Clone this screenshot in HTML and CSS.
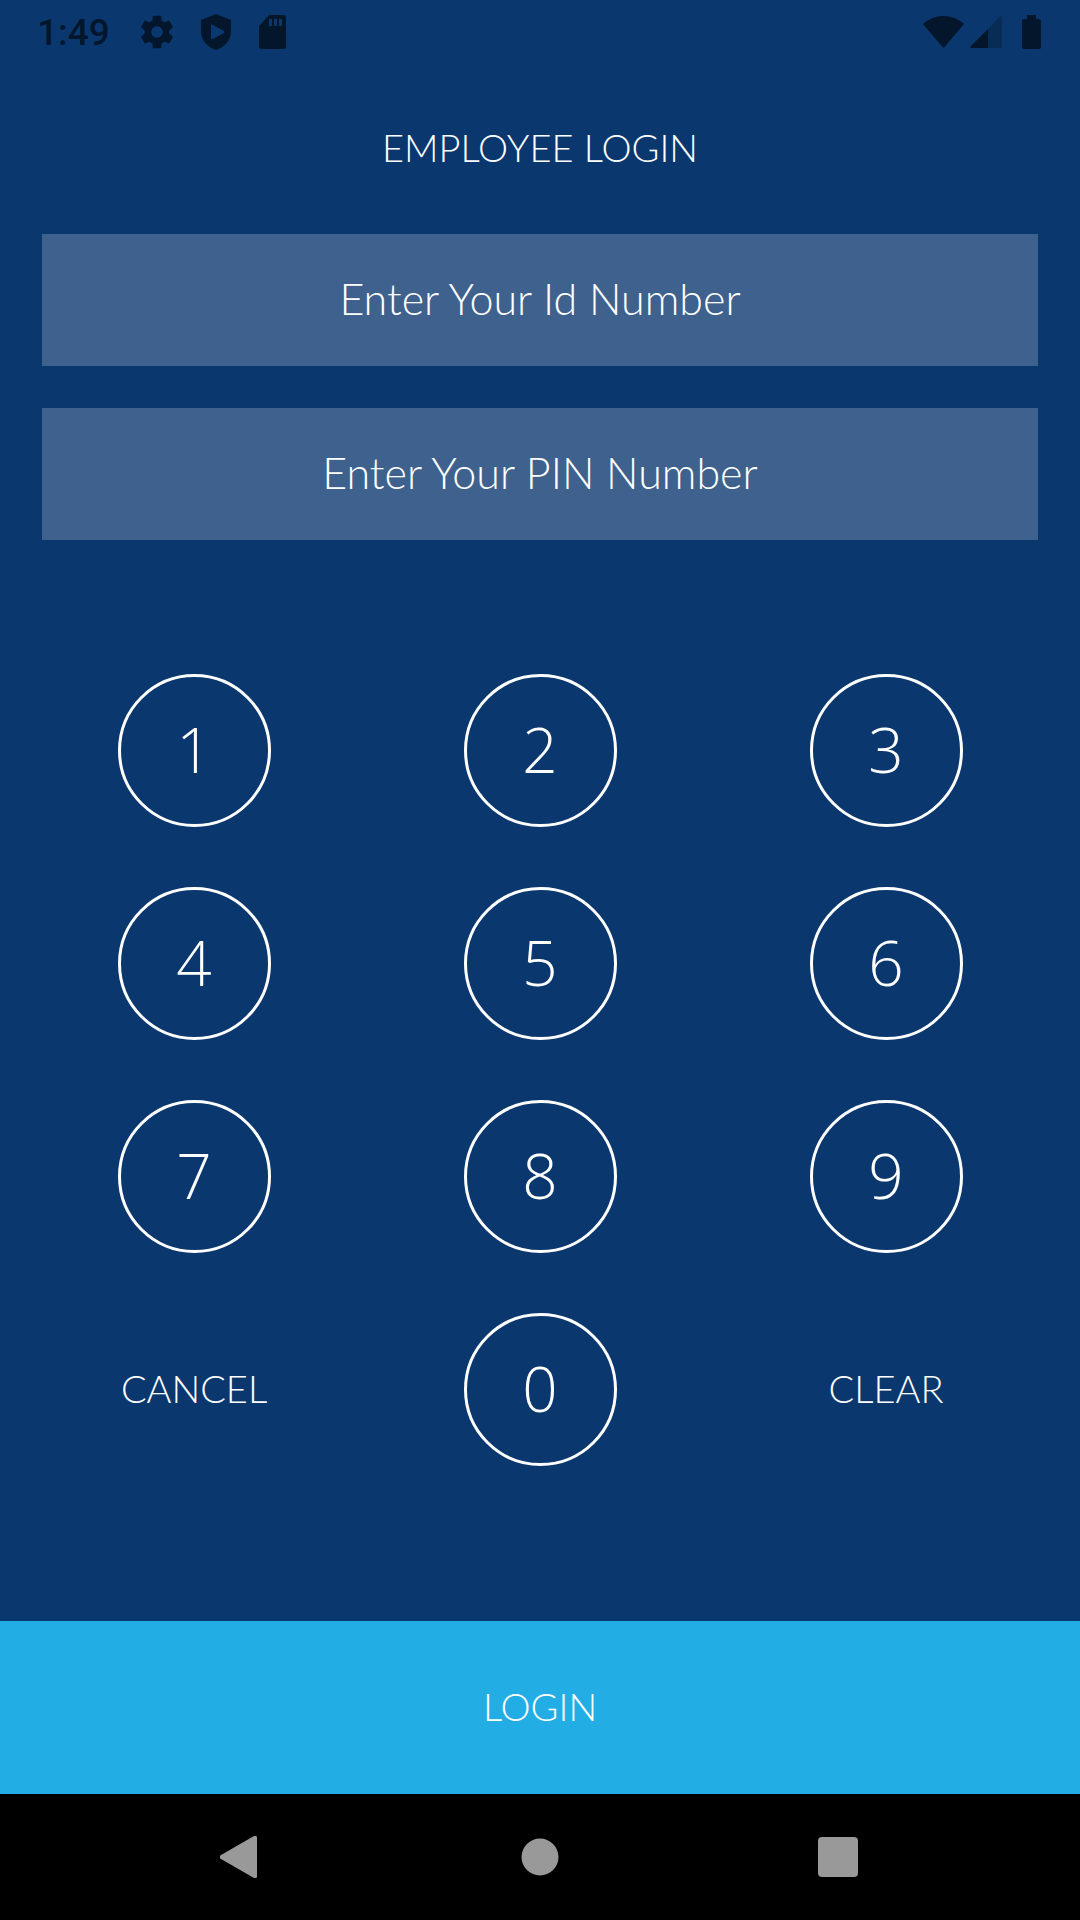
FILE: index.html
```
<!DOCTYPE html>
<html lang="en">
<head>
    <meta charset="UTF-8">
    <meta name="viewport" content="width=device-width, initial-scale=1">
    <title>Employee Login</title>
    <link rel="stylesheet" href="styles.css">
</head>
<body>
    <div class="status-bar">
        <span class="clock">1:49</span>
        <div class="status-left">
            <svg width="32" height="34" viewBox="2.2 2 19.6 20"><path d="M19.43 12.98c.04-.32.07-.64.07-.98s-.03-.66-.07-.98l2.11-1.65c.19-.15.24-.42.12-.64l-2-3.46c-.12-.22-.39-.3-.61-.22l-2.49 1c-.52-.4-1.08-.73-1.69-.98l-.38-2.65C14.46 2.18 14.25 2 14 2h-4c-.25 0-.46.18-.49.42l-.38 2.65c-.61.25-1.17.59-1.69.98l-2.49-1c-.23-.09-.49 0-.61.22l-2 3.46c-.13.22-.07.49.12.64l2.11 1.65c-.04.32-.07.65-.07.98s.03.66.07.98l-2.11 1.65c-.19.15-.24.42-.12.64l2 3.46c.12.22.39.3.61.22l2.49-1c.52.4 1.08.73 1.69.98l.38 2.65c.03.24.24.42.49.42h4c.25 0 .46-.18.49-.42l.38-2.65c.61-.25 1.17-.59 1.69-.98l2.49 1c.23.09.49 0 .61-.22l2-3.46c.12-.22.07-.49-.12-.64l-2.11-1.65zM12 15.5c-1.93 0-3.5-1.57-3.5-3.5s1.57-3.5 3.5-3.5 3.5 1.57 3.5 3.5-1.57 3.5-3.5 3.5z"/></svg>
            <svg width="30" height="36" viewBox="0 0 30 36"><path fill-rule="evenodd" d="M15 0L30 6V17C30 26 24 33 15 36C6 33 0 26 0 17V6ZM10 11V24Q10 26 12 25L23 19Q24 18 23 17L12 11Q10 10 10 11Z"/></svg>
            <svg width="27" height="34" viewBox="0 0 27 34"><path fill-rule="evenodd" d="M10 0H24Q27 0 27 3V31Q27 34 24 34H3Q0 34 0 31V11ZM10 4V11H13V4ZM15 4V11H18V4ZM20 4V11H23V4Z"/></svg>
        </div>
        <div class="status-right">
            <svg width="41" height="32" viewBox="0 0 41 32"><path d="M0 8Q9 0 20.500 0T41 8L21.500 31Q20.500 32 19.500 31Z"/></svg>
            <svg width="32" height="32" viewBox="0 0 32 32"><path opacity=".35" d="M18 14L29 1Q32 -1 32 2V32H18Z"/><path d="M18 13V32H2Q-1 32 1 30Z"/></svg>
            <svg class="battery" width="19" height="34" viewBox="0 0 19 34"><path d="M5 0H14V4H17Q19 4 19 6V32Q19 34 17 34H2Q0 34 0 32V6Q0 4 2 4H5Z"/></svg>
        </div>
    </div>

    <form class="login" onsubmit="return false">
        <h1 class="title">EMPLOYEE LOGIN</h1>

        <div class="fields">
            <input type="text" id="id-number" class="field" placeholder="Enter Your Id Number" aria-label="Id number" inputmode="none">
            <input type="password" id="pin-number" class="field" placeholder="Enter Your PIN Number" aria-label="PIN number" inputmode="none">
        </div>

        <div class="keypad">
            <button type="button" class="key">1</button>
            <button type="button" class="key">2</button>
            <button type="button" class="key">3</button>
            <button type="button" class="key">4</button>
            <button type="button" class="key">5</button>
            <button type="button" class="key">6</button>
            <button type="button" class="key">7</button>
            <button type="button" class="key">8</button>
            <button type="button" class="key">9</button>
            <button type="button" class="action" id="cancel">CANCEL</button>
            <button type="button" class="key">0</button>
            <button type="button" class="action" id="clear">CLEAR</button>
        </div>

        <button type="submit" class="submit">LOGIN</button>
    </form>

    <div class="nav-bar">
        <button class="nav-button" aria-label="Back"><svg width="42" height="42" viewBox="0 0 42 42"><path d="M34 0Q37 -1 37 2V40Q37 43 34 42L1 23Q-2 21 1 19Z"/></svg></button>
        <button class="nav-button" aria-label="Home"><svg width="42" height="42" viewBox="0 0 42 42"><circle cx="21" cy="21" r="18.500"/></svg></button>
        <button class="nav-button" aria-label="Recent apps"><svg width="42" height="42" viewBox="0 0 42 42"><rect x="0" y="1" width="40" height="40" rx="4"/></svg></button>
    </div>

    <script>
        const idField = document.getElementById("id-number");
        const pinField = document.getElementById("pin-number");
        let activeField = idField;

        // digits go to the field that was touched last
        [idField, pinField].forEach(field => {
            field.addEventListener("focus", () => activeField = field);
        });

        document.querySelectorAll(".key").forEach(key => {
            key.addEventListener("click", () => activeField.value += key.textContent);
        });

        document.getElementById("clear").addEventListener("click", () => activeField.value = "");

        document.getElementById("cancel").addEventListener("click", () => {
            idField.value = "";
            pinField.value = "";
            activeField = idField;
        });
    </script>
</body>
</html>
```
FILE: styles.css
```
* {
    box-sizing: border-box;
}

body {
    margin: 0;
    min-height: 100vh;
    display: flex;
    flex-direction: column;
    background-color: #0a386e;
    color: #fff;
    font-family: Lato, "Open Sans", sans-serif;
    font-weight: 300;
}

button,
input {
    margin: 0;
    padding: 0;
    border: none;
    border-radius: 0;
    background: none;
    color: inherit;
    font: inherit;
}

button {
    cursor: pointer;
}

svg {
    display: block;
}

/* status bar */
.status-bar {
    display: flex;
    align-items: center;
    height: 64px;
    padding: 0 39px 0 37px;
    color: #03162c;
    fill: #03162c;
}

.clock {
    font-family: Roboto, sans-serif;
    font-size: 37px;
    font-weight: 500;
}

.status-left {
    display: flex;
    align-items: center;
    gap: 28px;
    margin-left: 31px;
}

.status-right {
    display: flex;
    align-items: center;
    gap: 6px;
    margin-left: auto;
}

.battery {
    margin-left: 14px;
}

/* login form */
.login {
    flex: 1;
    display: flex;
    flex-direction: column;
}

.title {
    margin: 0;
    padding-bottom: 4px;
    font-size: 38px;
    font-weight: 300;
    line-height: 166px;
    text-align: center;
}

.fields {
    display: flex;
    flex-direction: column;
    gap: 42px;
    padding: 0 42px;
}

.field {
    width: 100%;
    height: 132px;
    padding-bottom: 3px;
    background-color: #3e628d;
    font-size: 43px;
    text-align: center;
    outline: none;
}

.field::placeholder {
    color: #fff;
    opacity: 1;
}

.keypad {
    display: grid;
    grid-template-columns: repeat(3, 1fr);
    row-gap: 60px;
    place-items: center;
    margin-bottom: auto;
    padding: 134px 21px 60px;
}

.key {
    width: 153px;
    height: 153px;
    padding-bottom: 3px;
    border: 3px solid #fff;
    border-radius: 50%;
    font-family: "Open Sans", sans-serif;
    font-size: 62px;
    font-weight: 360;
}

.action,
.submit {
    padding-bottom: 4px;
    font-size: 38px;
}

.submit {
    height: 173px;
    background-color: #23ade5;
}

/* system navigation */
.nav-bar {
    display: flex;
    align-items: center;
    justify-content: center;
    gap: 257px;
    height: 126px;
    background-color: #000;
    fill: #999;
}
```
